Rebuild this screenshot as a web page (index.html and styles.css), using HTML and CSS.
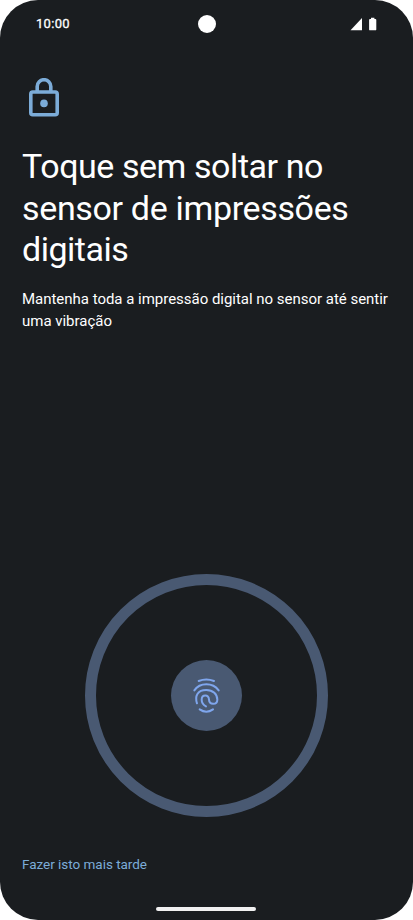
FILE: index.html
```html
<!DOCTYPE html>
<html lang="pt">
<head>
<meta charset="utf-8">
<title>Impressão digital</title>
<link rel="stylesheet" href="styles.css">
</head>
<body>
<main class="phone">
  <header class="status">
    <span class="time">10:00</span>
    <span class="camera"></span>
    <svg class="indicators" viewBox="0 0 27 14"><path d="M.5 13.3H12V1Z"/><path d="M21 .8h3.4v1.2h1q.9 0 .9.9v9.5q0 .9-.9.9h-5.4q-.9 0-.9-.9V2.900q0-.9.9-.9h1Z"/></svg>
  </header>
  <svg class="lock" viewBox="0 0 30 40"><path d="M8.2 13.500V8.500a6.800 6.800 0 0 1 13.600 0v5"/><rect x="1.800" y="14" width="26.400" height="22.800" rx="2"/><circle cx="15" cy="25.400" r="3.800"/></svg>
  <h1 class="title">
    <span class="line first">Toque sem soltar no</span>
    <span class="line">sensor de impressões</span>
    <span class="line last">digitais</span>
  </h1>
  <p class="hint">
    <span class="line">Mantenha toda a impressão digital no sensor até sentir</span>
    <span class="line">uma vibração</span>
  </p>
  <div class="ring">
    <div class="sensor">
      <svg class="print" viewBox="33 30 213 213"><path d="M116 93Q139 84 162 93"/><path d="M103 121C120 97 158 97 176 121"/><path d="M111 160C104 138 112 120 139 120C159 120 172 133 172 149C172 165 148 166 147 149C147 132 125 133 125 149Q125 162 138 169"/><path d="M119 178Q139 192 159 178"/></svg>
    </div>
  </div>
  <a class="later">Fazer isto mais tarde</a>
  <div class="handle"></div>
</main>
</body>
</html>
```
FILE: styles.css
```css
body {
  margin: 0;
  background: #fff;
  font-family: Roboto, "Liberation Sans", sans-serif;
}

.phone {
  box-sizing: border-box;
  display: flex;
  flex-direction: column;
  width: 413px;
  height: 920px;
  padding: 0 22px;
  border-radius: 38px;
  background: #1a1d20;
  color: #fff;
  overflow: hidden;
}

.status {
  display: grid;
  grid-template-columns: 1fr 18px 1fr;
  align-items: center;
  height: 48px;
  padding: 0 14px 0 14px;
}

.time {
  margin-top: -1px;
  font-size: 13px;
  font-weight: 400;
  letter-spacing: 0.3px;
  -webkit-text-stroke: 0.3px #fff;
}

.camera {
  width: 18px;
  height: 18px;
  border-radius: 50%;
  background: #fff;
}

.indicators {
  justify-self: end;
  width: 27px;
  height: 14px;
  margin-top: -1px;
  fill: #fff;
}

.lock {
  width: 30px;
  height: 40px;
  margin: 30px 0 0 7px;
  fill: none;
  stroke: #7cacd8;
  stroke-width: 3.6;
}

.lock circle {
  fill: #7cacd8;
  stroke: none;
}

.line {
  display: block;
  width: max-content;
}

.title {
  margin: 28px 0 0;
  font-size: 34px;
  font-weight: 400;
  line-height: 41.5px;
  letter-spacing: -0.34px;
}

.title .first {
  letter-spacing: -0.44px;
}

.title .last {
  letter-spacing: -0.5px;
}

.hint {
  margin: 17px 0 0;
  font-size: 15px;
  line-height: 22px;
  letter-spacing: -0.02px;
}

.ring {
  box-sizing: border-box;
  display: grid;
  place-items: center;
  align-self: center;
  width: 243px;
  height: 243px;
  margin-top: 242px;
  border: 11.5px solid #495972;
  border-radius: 50%;
}

.sensor {
  width: 71px;
  height: 71px;
  border-radius: 50%;
  background: #495972;
}

.print {
  display: block;
  fill: none;
  stroke: #7fa6ed;
  stroke-width: 6;
  stroke-linecap: round;
}

.later {
  margin-top: 37px;
  color: #7cacd8;
  font-size: 13.5px;
  line-height: 20px;
  letter-spacing: -0.03px;
}

.handle {
  align-self: center;
  width: 100px;
  height: 4px;
  margin: auto 1px 9px 0;
  border-radius: 2px;
  background: #f1f1f1;
}
```
